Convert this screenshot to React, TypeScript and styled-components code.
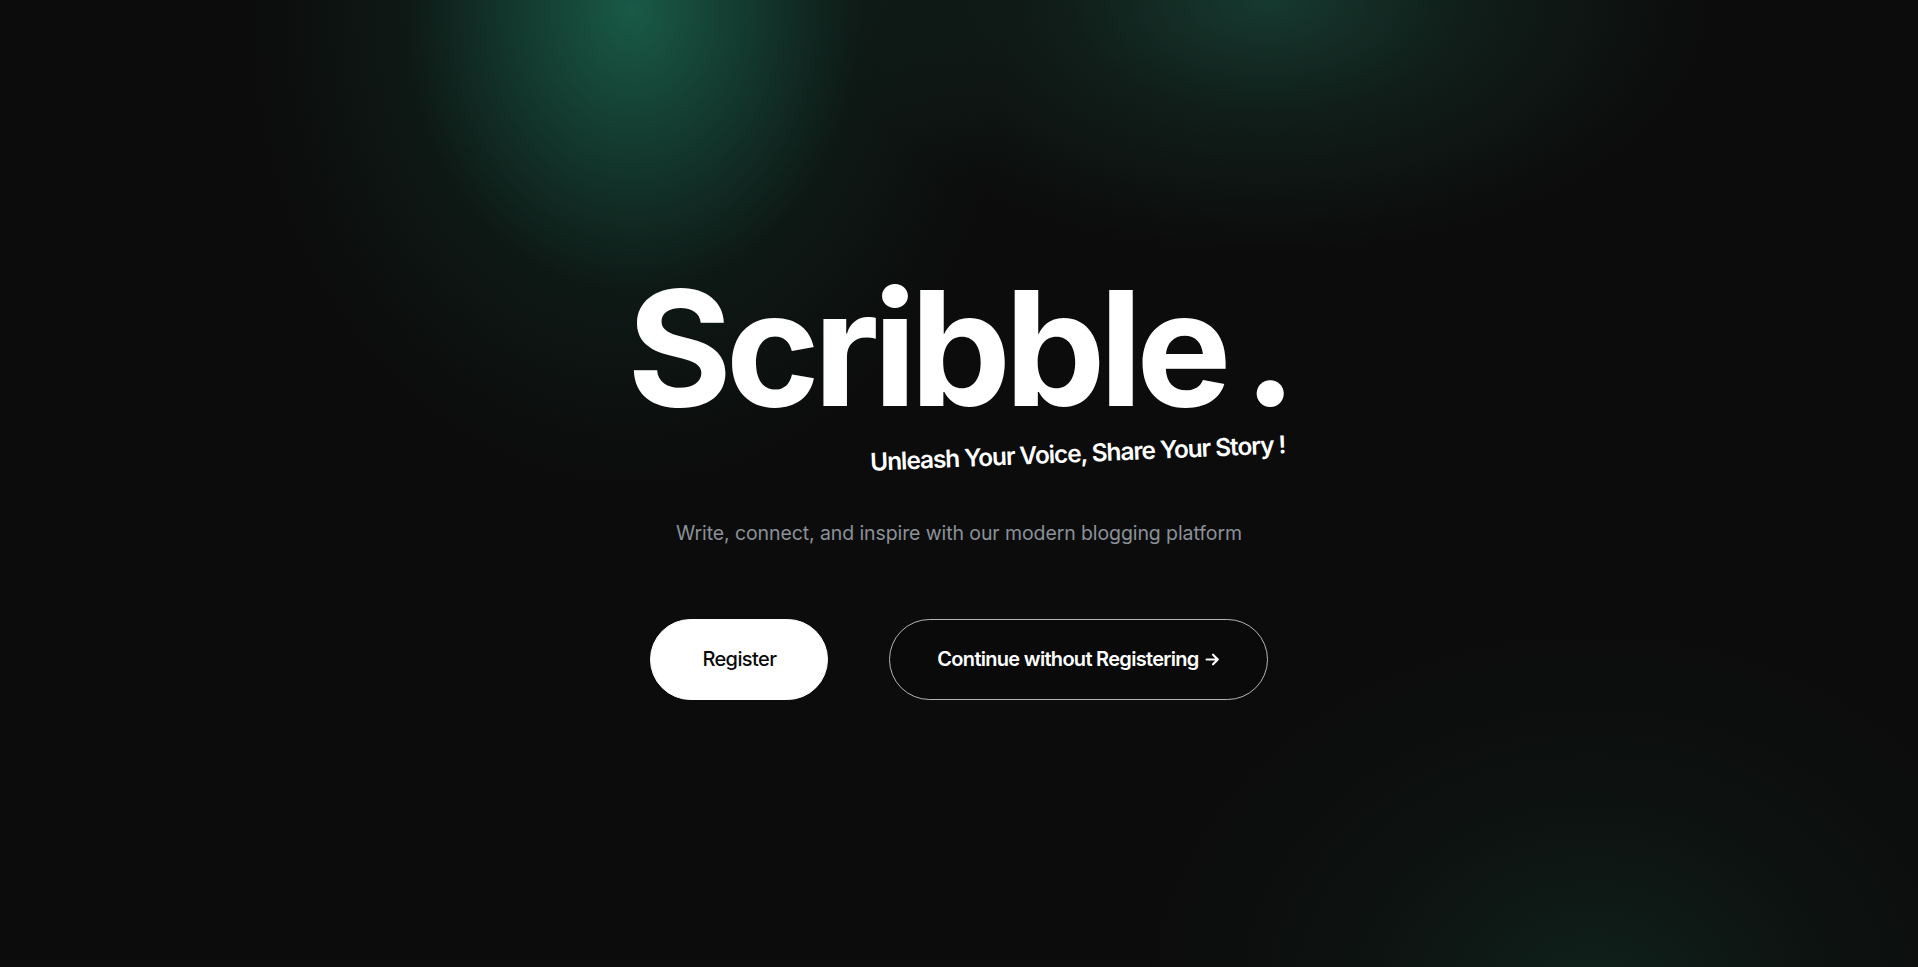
import React from "react";
import styled, { createGlobalStyle } from "styled-components";

const GlobalStyle = createGlobalStyle`
  html, body {
    margin: 0;
    padding: 0;
    background: #0c0c0c;
  }
  * { box-sizing: border-box; }
`;

const Page = styled.main`
  min-height: 100vh;
  width: 100%;
  display: flex;
  align-items: center;
  justify-content: center;
  font-family: Inter, "Noto Sans", sans-serif;
  background-color: #0c0c0c;
  background-image:
    radial-gradient(ellipse 380px 470px at 33% 1%, rgba(26, 94, 74, 0.95) 0%, rgba(23, 80, 63, 0.7) 28%, rgba(17, 48, 39, 0.35) 60%, rgba(12, 12, 12, 0) 100%),
    radial-gradient(ellipse 440px 250px at 66% 0%, rgba(23, 60, 49, 0.95) 0%, rgba(19, 42, 35, 0.6) 45%, rgba(12, 12, 12, 0) 100%),
    radial-gradient(ellipse 440px 370px at 83% 104%, rgba(16, 38, 31, 0.85) 0%, rgba(14, 26, 22, 0.5) 50%, rgba(12, 12, 12, 0) 100%);
`;

const Hero = styled.section`
  display: flex;
  flex-direction: column;
  align-items: center;
`;

const Brand = styled.div`
  display: flex;
  flex-direction: column;
  align-items: flex-end;
`;

const Title = styled.h1`
  margin: 0;
  font-family: Inter, "Liberation Sans", sans-serif;
  font-size: 160px;
  line-height: 1;
  font-weight: 700;
  letter-spacing: -0.04em;
  word-spacing: -13px;
  color: #ffffff;
  white-space: nowrap;
`;

const Tagline = styled.p`
  margin: 9px 5px 0 0;
  font-size: 24.5px;
  line-height: 32px;
  font-weight: 600;
  letter-spacing: -0.045em;
  color: #ffffff;
  transform: rotate(-2.4deg);
  white-space: nowrap;
`;

const Description = styled.p`
  margin: 50px 0 0;
  font-size: 19.5px;
  line-height: 28px;
  font-weight: 400;
  letter-spacing: -0.005em;
  color: #8b9199;
`;

const Actions = styled.div`
  display: flex;
  align-items: center;
  gap: 61px;
  margin-top: 72px;
`;

const PillButton = styled.button<{ $variant: "solid" | "outline" }>`
  height: 81px;
  padding: 0 ${(p) => (p.$variant === "solid" ? "51px" : "47px")};
  border-radius: 999px;
  font-family: Inter, "Noto Sans", sans-serif;
  font-size: 20px;
  font-weight: ${(p) => (p.$variant === "solid" ? 500 : 600)};
  letter-spacing: ${(p) => (p.$variant === "solid" ? "-0.03em" : "-0.035em")};
  cursor: pointer;
  display: inline-flex;
  align-items: center;
  justify-content: center;
  gap: 6px;
  background: ${(p) => (p.$variant === "solid" ? "#ffffff" : "#0a0a0a")};
  color: ${(p) => (p.$variant === "solid" ? "#0a0a0a" : "#ffffff")};
  border: 1px solid ${(p) => (p.$variant === "solid" ? "#ffffff" : "#b5b5b5")};
`;

const Arrow = () => (
  <svg width="15" height="15" viewBox="0 0 14 14" fill="none" stroke="currentColor" strokeWidth="2" strokeLinecap="round" strokeLinejoin="round">
    <path d="M1.5 7h10.5M7.5 2.5 12 7l-4.5 4.5" />
  </svg>
);

export default function App() {
  return (
    <>
      <GlobalStyle />
      <Page>
        <Hero>
          <Brand>
            <Title>Scribble .</Title>
            <Tagline>Unleash Your Voice, Share Your Story !</Tagline>
          </Brand>
          <Description>Write, connect, and inspire with our modern blogging platform</Description>
          <Actions>
            <PillButton $variant="solid">Register</PillButton>
            <PillButton $variant="outline">
              Continue without Registering <Arrow />
            </PillButton>
          </Actions>
        </Hero>
      </Page>
    </>
  );
}
